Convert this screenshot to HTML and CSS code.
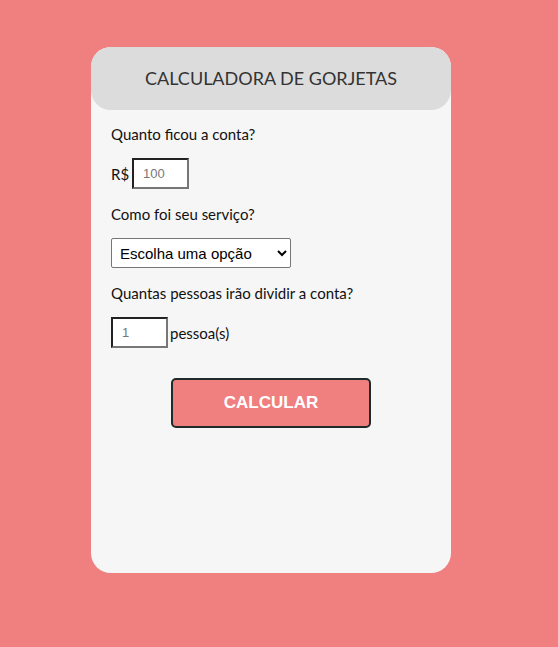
FILE: index.html
```html
<!DOCTYPE html>
<html lang="pt-BR">
<head>
<meta charset="utf-8">
<title>Calculadora de Gorjetas</title>
<link rel="stylesheet" href="styles.css">
</head>
<body>
<div class="card">
  <div class="header">CALCULADORA DE GORJETAS</div>
  <div class="content">
    <p class="label">Quanto ficou a conta?</p>
    <div class="row row-money">
      <span>R$</span>
      <input class="box" type="text" placeholder="100">
    </div>
    <p class="label">Como foi seu serviço?</p>
    <div class="row">
      <select class="select">
        <option>Escolha uma opção</option>
      </select>
    </div>
    <p class="label">Quantas pessoas irão dividir a conta?</p>
    <div class="row">
      <input class="box" type="text" placeholder="1">
      <span>pessoa(s)</span>
    </div>
    <div class="actions">
      <button class="btn" type="button">CALCULAR</button>
    </div>
  </div>
</div>
</body>
</html>
```
FILE: styles.css
```css
html, body {
  margin: 0;
  padding: 0;
}
body {
  background: #f08080;
  font-family: Lato, "Liberation Sans", sans-serif;
  font-size: 15px;
  color: #111;
  padding-top: 47px;
}
.card {
  width: 360px;
  height: 526px;
  margin-left: 91px;
  background: #f6f6f6;
  border-radius: 20px;
  box-sizing: border-box;
}
.header {
  height: 63px;
  background: #dcdcdc;
  border-radius: 20px;
  display: flex;
  align-items: center;
  justify-content: center;
  font-size: 18px;
  color: #333;
  padding-bottom: 1px;
  box-sizing: border-box;
}
.content {
  padding: 15px 20px 0 20px;
}
.label {
  margin: 0;
  line-height: 19px;
}
.row {
  display: flex;
  align-items: center;
  gap: 2px;
  margin: 14px 0 16px;
}
.row-money {
  gap: 3px;
}
.box {
  width: 57px;
  height: 31px;
  box-sizing: border-box;
  border: 2px solid;
  border-color: #222 #777 #777 #222;
  background: #fff;
  padding: 0 9px;
  font-family: "Liberation Sans", Arial, sans-serif;
  font-size: 13px;
  margin: 0;
  outline: none;
}
.box::placeholder {
  color: #777;
}
.select {
  width: 180px;
  height: 30px;
  box-sizing: border-box;
  border: 1px solid #767676;
  border-radius: 2px;
  background: #fff;
  font-family: "Liberation Sans", Arial, sans-serif;
  font-size: 15px;
  color: #000;
  padding: 0 4px;
  margin: 0;
}
.actions {
  display: flex;
  justify-content: center;
  margin-top: 30px;
}
.btn {
  width: 200px;
  height: 50px;
  background: #f08080;
  border: 2px solid #1f2a2a;
  border-radius: 5px;
  color: #fff;
  font-family: "Liberation Sans", Arial, sans-serif;
  font-weight: bold;
  font-size: 17px;
  cursor: pointer;
}
```
